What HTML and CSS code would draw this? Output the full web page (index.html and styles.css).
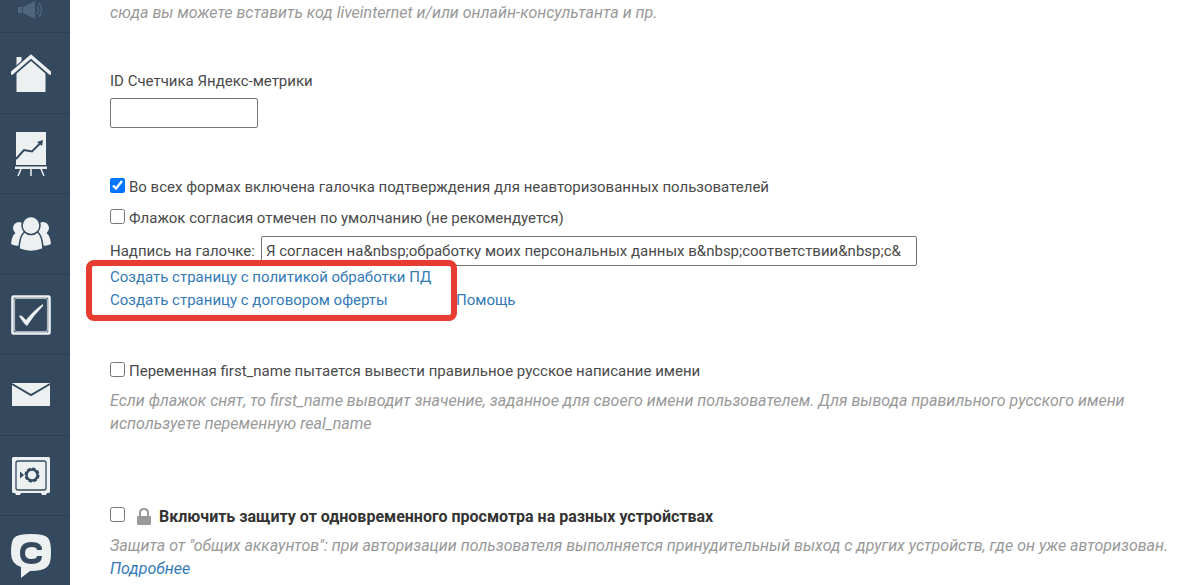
FILE: index.html
```html
<!DOCTYPE html>
<html lang="ru">
<head>
    <meta charset="UTF-8" />
    <meta name="viewport" content="width=device-width, initial-scale=1.0" />
    <title>Настройки</title>
    <link rel="stylesheet" href="styles.css">
</head>
<body>
    <nav class="sidebar">
        <a href="#" class="nav-item nav-item-first" aria-label="Уведомления">
            <svg class="icon-muted" width="24" height="18" viewBox="0 0 24 18">
                <path d="M0 6h4v6H0zM5 6l12-6v18L5 12z" />
                <path d="M19 5q3 4 0 8M21 2q5 7 0 14" fill="none" stroke="#4f657c" stroke-width="1.3" />
            </svg>
        </a>
        <a href="#" class="nav-item" aria-label="Главная">
            <svg width="40" height="40" viewBox="0 0 40 40">
                <path d="M5.500 4h5v5l-5 4.500zM5.500 20.500L20 8l14.500 12.500V39h-29z" />
                <path d="M1 20L20 3.500 39 20" fill="none" stroke="#34495e" stroke-width="6" />
                <path d="M1 20L20 3.500 39 20" fill="none" stroke="#ecf0f1" stroke-width="3.400" stroke-linecap="round" />
            </svg>
        </a>
        <a href="#" class="nav-item" aria-label="Статистика">
            <svg width="32" height="46" viewBox="0 0 32 46">
                <path d="M1 1h30v33H1zM0 35.500h32v2.500H0z" />
                <path d="M6 38l-3 7M16 38v7M26 38l3 7" stroke="#ecf0f1" stroke-width="1.500" />
                <path d="M1 28l8-9 8 1.500 8-8" fill="none" stroke="#34495e" stroke-width="2" />
                <path d="M28 9l-1 6-5-4z" fill="#34495e" />
            </svg>
        </a>
        <a href="#" class="nav-item" aria-label="Пользователи">
            <svg width="40" height="36" viewBox="0 0 40 36">
                <circle cx="8" cy="12" r="6" />
                <circle cx="32" cy="12" r="6" />
                <path d="M0 28q1-12 8-12h24q7 0 8 12-5 3-10 1H10q-5 2-10-1z" />
                <path d="M8 33q1-18 9-18h6q8 0 9 18-12 5-24 0z" stroke="#34495e" stroke-width="1.500" />
                <circle cx="20" cy="9.500" r="9" stroke="#34495e" stroke-width="1.500" />
            </svg>
        </a>
        <a href="#" class="nav-item" aria-label="Задания">
            <svg width="40" height="40" viewBox="0 0 40 40">
                <rect x="1.500" y="1.500" width="37" height="37" rx="1" fill="none" stroke="#ecf0f1" stroke-width="2.600" />
                <rect x="3.500" y="3.500" width="33" height="33" rx="2" fill="none" stroke="#aab5be" stroke-width="1.200" />
                <path d="M8 21q2-1 3 0l4 4Q23 15 32 9v2Q23 20 16 31q-3-2-8-10z" />
            </svg>
        </a>
        <a href="#" class="nav-item" aria-label="Сообщения">
            <svg width="40" height="24" viewBox="0 0 40 24">
                <path d="M1 0h38v23H1z" />
                <path d="M1 1l19 11L39 1" fill="none" stroke="#34495e" stroke-width="2" />
            </svg>
        </a>
        <a href="#" class="nav-item" aria-label="Продажи">
            <svg width="40" height="40" viewBox="0 0 40 40">
                <path d="M2 1h36l1 1v34l-1 1h-2l-1 2h-4l-1-2H10l-1 2H5l-1-2H2l-1-1V2z" />
                <rect x="5" y="5" width="30" height="29" rx="2" fill="none" stroke="#34495e" stroke-width="1.300" />
                <path d="M9 15.500l4 3.500-4 3.500z" fill="#34495e" />
                <circle cx="21" cy="19" r="5.500" fill="none" stroke="#34495e" stroke-width="2.400" />
                <circle cx="21" cy="19" r="6.800" fill="none" stroke="#34495e" stroke-width="1.500" stroke-dasharray="3.500 1.840" />
            </svg>
        </a>
        <a href="#" class="nav-item" aria-label="Чаты">
            <svg width="40" height="44" viewBox="0 0 40 44">
                <path d="M20 0q14 0 17 4 3 3 3 15 0 11-4 14-4 4-17 4L10 44V33Q0 30 0 19 0 7 3 4 6 0 20 0z" />
                <path d="M28.500 16q0-5.500-8-5.500-9 0-9 8.500t9 8.500q8 0 8-5.500" fill="none" stroke="#34495e" stroke-width="5" />
            </svg>
        </a>
    </nav>

    <main class="content">
        <form>
            <p class="hint">сюда вы можете вставить код liveinternet и/или онлайн-консультанта и пр.</p>

            <div class="form-group counter">
                <label for="metrikaId">ID Счетчика Яндекс-метрики</label>
                <input type="text" id="metrikaId" name="metrikaId" />
            </div>

            <div class="form-group agreement">
                <div class="check-row">
                    <input type="checkbox" id="confirmAll" checked />
                    <label for="confirmAll">Во всех формах включена галочка подтверждения для неавторизованных пользователей</label>
                </div>
                <div class="check-row">
                    <input type="checkbox" id="confirmDefault" />
                    <label for="confirmDefault">Флажок согласия отмечен по умолчанию (не рекомендуется)</label>
                </div>
                <div class="text-row">
                    <label for="confirmText">Надпись на галочке:</label>
                    <input type="text" id="confirmText" value="Я согласен на&amp;nbsp;обработку моих персональных данных в&amp;nbsp;соответствии&amp;nbsp;с&amp;" />
                </div>
                <div class="links">
                    <a href="#">Создать страницу с политикой обработки ПД</a>
                    <a href="#">Создать страницу с договором оферты</a>
                    <a href="#">Помощь</a>
                    <span class="highlight"></span>
                </div>
            </div>

            <div class="form-group names">
                <div class="check-row">
                    <input type="checkbox" id="firstName" />
                    <label for="firstName">Переменная first_name пытается вывести правильное русское написание имени</label>
                </div>
                <p class="hint">Если флажок снят, то first_name выводит значение, заданное для своего имени пользователем. Для вывода правильного русского имени используете переменную real_name</p>
            </div>

            <div class="form-group protection">
                <div class="check-row">
                    <input type="checkbox" id="protect" />
                    <svg class="lock" width="14" height="18" viewBox="0 0 14 18">
                        <path d="M3 9V5q0-4 4-4t4 4v4" fill="none" stroke="#999" stroke-width="2" />
                        <rect y="8" width="14" height="9" rx="1" fill="#999" />
                    </svg>
                    <label for="protect">Включить защиту от одновременного просмотра на разных устройствах</label>
                </div>
                <p class="hint">Защита от "общих аккаунтов": при авторизации пользователя выполняется принудительный выход с других устройств, где он уже авторизован. <a href="#">Подробнее</a></p>
            </div>
        </form>
    </main>
</body>
</html>
```
FILE: styles.css
```css
* {
    box-sizing: border-box;
}
body {
    display: flex;
    height: 100vh;
    margin: 0;
    overflow: hidden;
    background-color: #fff;
    color: #4a4a4a;
    font-family: Roboto, "Open Sans", sans-serif;
    font-size: 15px;
    line-height: 23px;
}
a {
    color: #337ab7;
    text-decoration: none;
}
.sidebar {
    flex: 0 0 70px;
    overflow: hidden;
    background-color: #34495e;
}
.nav-item {
    display: flex;
    align-items: center;
    justify-content: center;
    height: 80px;
    padding-right: 8px;
    border-bottom: 1px solid #2c3e50;
}
.nav-item:nth-child(even) {
    height: 81px;
}
.nav-item-first {
    height: 33px;
    padding-right: 10px;
    padding-bottom: 12px;
}
.nav-item svg {
    fill: #ecf0f1;
}
.nav-item .icon-muted {
    fill: #4f657c;
}
.content {
    flex: 1;
    min-width: 0;
    padding: 1px 8px 0 40px;
}
.hint {
    margin: 0;
    color: #999;
    font-size: 16px;
    font-style: italic;
}
input[type="text"] {
    height: 30px;
    padding: 1px 4px;
    border: 1px solid #767676;
    border-radius: 2px;
    color: inherit;
    font: inherit;
}
input[type="checkbox"] {
    flex: none;
    width: 15px;
    height: 15px;
    margin: 0 4px 4px 0;
}
.counter {
    display: flex;
    flex-direction: column;
    align-items: flex-start;
    gap: 5px;
    margin-top: 46px;
}
#metrikaId {
    width: 148px;
}
.agreement {
    margin-top: 48px;
}
.check-row {
    display: flex;
    align-items: center;
}
.agreement .check-row {
    margin-bottom: 8px;
}
.text-row {
    display: flex;
    align-items: center;
    gap: 6px;
    margin-top: -2px;
}
#confirmText {
    width: 656px;
}
.links {
    position: relative;
    display: grid;
    grid-template-columns: 346px auto;
    justify-content: start;
}
.links a:first-child {
    grid-column: 1 / -1;
}
.highlight {
    position: absolute;
    top: -6px;
    left: -24px;
    width: 371px;
    height: 61px;
    border: 6px solid #e63c32;
    border-radius: 8px;
    pointer-events: none;
}
.names {
    margin-top: 48px;
}
.names .hint,
.protection .hint {
    margin-top: 6px;
}
.protection {
    margin-top: 70px;
}
.protection label {
    color: #333;
    font-size: 16px;
    font-weight: bold;
}
.lock {
    margin: 0 8px;
}
```
